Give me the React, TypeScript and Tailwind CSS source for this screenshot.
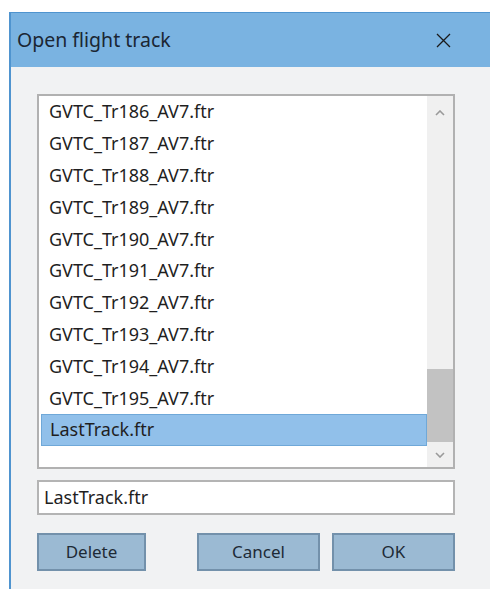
import React from "react";

const files = [
  "GVTC_Tr186_AV7.ftr",
  "GVTC_Tr187_AV7.ftr",
  "GVTC_Tr188_AV7.ftr",
  "GVTC_Tr189_AV7.ftr",
  "GVTC_Tr190_AV7.ftr",
  "GVTC_Tr191_AV7.ftr",
  "GVTC_Tr192_AV7.ftr",
  "GVTC_Tr193_AV7.ftr",
  "GVTC_Tr194_AV7.ftr",
  "GVTC_Tr195_AV7.ftr",
  "LastTrack.ftr",
];

const font = { fontFamily: '"Noto Sans", "Open Sans", sans-serif' };

function Chevron({ up }: { up?: boolean }) {
  return (
    <svg width="10" height="6" viewBox="0 0 10 6" className="block">
      <path
        d={up ? "M1 5 L5 1 L9 5" : "M1 1 L5 5 L9 1"}
        fill="none"
        stroke="#9a9a9a"
        strokeWidth="1.6"
      />
    </svg>
  );
}

function Btn({ label, className }: { label: string; className: string }) {
  return (
    <button
      className={`h-[38px] border-2 border-[#7391ab] bg-[#9bbad3] text-[17px] text-[#1e2a36] ${className}`}
    >
      {label}
    </button>
  );
}

export default function App() {
  const selected = "LastTrack.ftr";
  return (
    <div className="w-[490px] h-[589px] bg-white pl-[9px] pt-[12px] overflow-hidden" style={font}>
      <div className="w-[481px] h-[577px] border-l-2 border-t border-[#4f94cf] bg-[#f1f2f3] flex flex-col">
        {/* title bar */}
        <div className="h-[54px] bg-[#7ab3e1] flex items-center justify-between pl-[6px] pr-[39px] shrink-0">
          <span className="text-[19.5px] text-[#1b2633]">Open flight track</span>
          <svg width="15" height="15" viewBox="0 0 15 15">
            <path d="M1 1 L14 14 M14 1 L1 14" stroke="#1a1a1a" strokeWidth="1.3" />
          </svg>
        </div>

        {/* body */}
        <div className="pl-[26px] pt-[27px] w-[444px] flex flex-col">
          {/* file list */}
          <div className="h-[375px] border-2 border-[#b1b1b1] bg-white flex">
            <div className="flex-1 pl-[2px] pt-0">
              {files.map((f) => (
                <div
                  key={f}
                  className={`h-[31.8px] flex items-center pl-[8px] text-[18px] text-[#1f1f1f] ${
                    f === selected ? "bg-[#91c0ea] border border-[#6fa8d8] pl-[7px]" : ""
                  }`}
                >
                  {f}
                </div>
              ))}
            </div>
            {/* scrollbar */}
            <div className="w-[26px] bg-[#f0f0f0] flex flex-col items-center">
              <div className="h-[34px] flex items-center justify-center">
                <Chevron up />
              </div>
              <div className="flex-1" />
              <div className="w-[26px] h-[73px] bg-[#c2c2c2]" />
              <div className="h-[25px] flex items-center justify-center">
                <Chevron />
              </div>
            </div>
          </div>

          {/* filename input */}
          <div className="mt-[11px] h-[35px] border-2 border-[#b4b4b4] bg-white flex items-center pl-[5px] text-[18px] text-[#1f1f1f]">
            LastTrack.ftr
          </div>

          {/* buttons */}
          <div className="mt-[18px] flex">
            <Btn label="Delete" className="w-[109px]" />
            <Btn label="Cancel" className="w-[123px] ml-[51px]" />
            <Btn label="OK" className="w-[123px] ml-[12px]" />
          </div>
        </div>
      </div>
    </div>
  );
}
